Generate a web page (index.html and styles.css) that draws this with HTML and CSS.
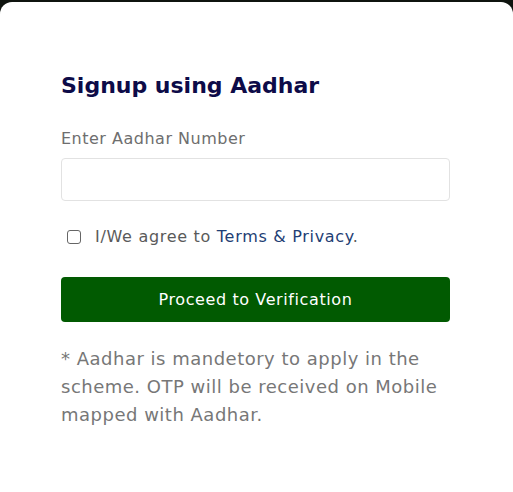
FILE: index.html
```html
<!DOCTYPE html>
<html lang="en">
<head>
    <meta charset="UTF-8">
    <meta name="viewport" content="width=device-width, initial-scale=1.0">
    <title>Signup using Aadhar</title>
    <link rel="stylesheet" href="styles.css">
</head>
<body>

<div class="card">
    <h2 class="title">Signup using Aadhar</h2>

    <label class="field-label" for="aadhar">Enter Aadhar Number</label>
    <input class="field-input" id="aadhar" type="text">

    <!-- Terms -->
    <label class="agree">
        <input type="checkbox" class="agree-box">
        <span>I/We agree to <a href="#" class="agree-link">Terms &amp; Privacy</a>.</span>
    </label>

    <button class="proceed-btn">Proceed to Verification</button>

    <p class="note">* Aadhar is mandetory to apply in the scheme. OTP will be received on Mobile mapped with Aadhar.</p>
</div>

</body>
</html>
```

FILE: styles.css
```css
html, body {
    margin: 0;
    padding: 0;
    height: 100%;
}

body {
    background-color: #0f140f;
    font-family: "DejaVu Sans", Arial, sans-serif;
    overflow: hidden;
}

.card {
    margin-top: 2px;
    height: calc(100% - 2px);
    background-color: #fff;
    border-radius: 12px 12px 0 0;
    padding: 64px 63px 0 61px;
    box-sizing: border-box;
    display: flex;
    flex-direction: column;
    align-items: stretch;
}

.title {
    margin: 0;
    font-size: 22px;
    font-weight: 600;
    color: #0d0b48;
    line-height: 40px;
}

.field-label {
    margin-top: 21px;
    font-size: 16px;
    letter-spacing: 0.5px;
    color: #6e6e6e;
    line-height: 24px;
}

.field-input {
    margin-top: 7px;
    height: 43px;
    border: 1px solid #e2e2e2;
    border-radius: 4px;
    box-sizing: border-box;
    font-family: inherit;
    font-size: 16px;
    padding: 0 12px;
}

.agree {
    margin-top: 23px;
    display: flex;
    align-items: center;
    font-size: 16px;
    letter-spacing: 0.7px;
    color: #5a5a5a;
    line-height: 26px;
}

.agree-box {
    appearance: none;
    width: 14px;
    height: 14px;
    margin: 0 14px 0 6px;
    border: 1.5px solid #666;
    border-radius: 3px;
    background-color: #fff;
    box-sizing: border-box;
}

.agree-link {
    color: #1e3e74;
    text-decoration: none;
}

.proceed-btn {
    margin-top: 27px;
    height: 45px;
    border: none;
    border-radius: 4px;
    background-color: #015a01;
    color: #fff;
    font-family: inherit;
    font-size: 16px;
    letter-spacing: 0.6px;
    cursor: pointer;
}

.note {
    margin: 23px 0 0;
    font-size: 18px;
    letter-spacing: 0.5px;
    line-height: 28px;
    color: #777;
}
```
